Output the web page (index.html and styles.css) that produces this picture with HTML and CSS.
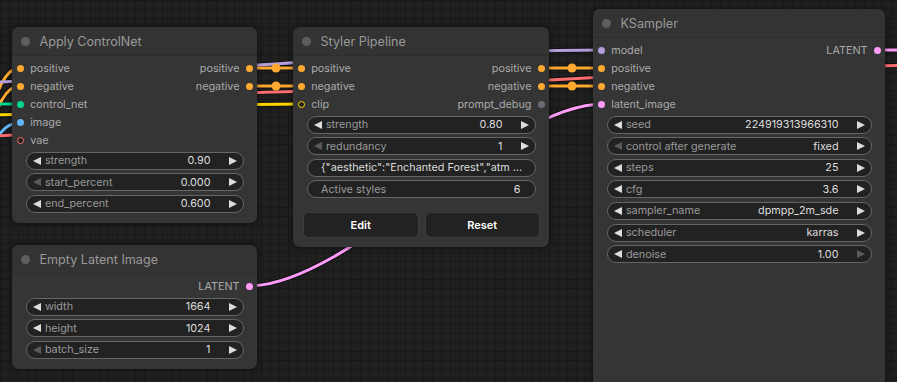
FILE: index.html
```html
<!DOCTYPE html>
<html>
    <head>
        <link rel="stylesheet" href="styles.css">
    </head>
    <body>
        <div class="canvas">
            <svg class="links" width="897" height="382" viewBox="0 0 897 382">
                <g class="shadow">
                    <path d="M -40 160 C -10 160, -10 68, 20 68"/>
                    <path d="M -40 172 C -10 172, -10 86, 20 86"/>
                    <path d="M 0 82 C 150 75, 400 50, 603 50"/>
                    <path d="M -100 116 C 100 116, 150 104, 303 104"/>
                    <path d="M -50 104 L 20 104"/>
                    <path d="M -30 152 C 0 152, -5 123, 20 123"/>
                    <path d="M -20 136 C 120 136, 160 93, 275 92 C 450 89, 650 70, 920 65"/>
                    <path d="M 249 68 L 303 68"/>
                    <path d="M 249 86 L 303 86"/>
                    <path d="M 541 68 L 603 68"/>
                    <path d="M 541 86 L 603 86"/>
                    <path d="M 249 286 C 349 286, 503 104, 603 104"/>
                    <path d="M 876 50 L 920 50"/>
                </g>
                <path class="link orange" d="M -40 160 C -10 160, -10 68, 20 68"/>
                <path class="link orange" d="M -40 172 C -10 172, -10 86, 20 86"/>
                <path class="link purple" d="M 0 82 C 150 75, 400 50, 603 50"/>
                <path class="link yellow" d="M -100 116 C 100 116, 150 104, 303 104"/>
                <path class="link green" d="M -50 104 L 20 104"/>
                <path class="link blue" d="M -30 152 C 0 152, -5 123, 20 123"/>
                <path class="link red" d="M -20 136 C 120 136, 160 93, 275 92 C 450 89, 650 70, 920 65"/>
                <path class="link orange" d="M 249 68 L 303 68"/>
                <path class="link orange" d="M 249 86 L 303 86"/>
                <path class="link orange" d="M 541 68 L 603 68"/>
                <path class="link orange" d="M 541 86 L 603 86"/>
                <path class="link pink" d="M 249 286 C 349 286, 503 104, 603 104"/>
                <path class="link pink" d="M 876 50 L 920 50"/>
                <circle class="marker" cx="276" cy="68" r="4.5"/>
                <circle class="marker" cx="276" cy="86" r="4.5"/>
                <circle class="marker" cx="572" cy="68" r="4.5"/>
                <circle class="marker" cx="572" cy="86" r="4.5"/>
            </svg>

            <div class="node controlnet">
                <div class="title"><span class="tdot"></span>Apply ControlNet</div>
                <div class="body">
                    <div class="row">
                        <div class="slot"><i class="dot c-cond"></i>positive</div>
                        <div class="slot">positive<i class="dot c-cond"></i></div>
                    </div>
                    <div class="row">
                        <div class="slot"><i class="dot c-cond"></i>negative</div>
                        <div class="slot">negative<i class="dot c-cond"></i></div>
                    </div>
                    <div class="row"><div class="slot"><i class="dot c-cnet"></i>control_net</div></div>
                    <div class="row"><div class="slot"><i class="dot c-image"></i>image</div></div>
                    <div class="row"><div class="slot"><i class="dot ring c-vae"></i>vae</div></div>
                    <div class="widgets">
                        <div class="w"><span class="arr left"></span><span class="lbl">strength</span><span class="val">0.90</span><span class="arr right"></span></div>
                        <div class="w"><span class="arr left off"></span><span class="lbl">start_percent</span><span class="val">0.000</span><span class="arr right"></span></div>
                        <div class="w"><span class="arr left"></span><span class="lbl">end_percent</span><span class="val">0.600</span><span class="arr right"></span></div>
                    </div>
                </div>
            </div>

            <div class="node styler">
                <div class="title"><span class="tdot"></span>Styler Pipeline</div>
                <div class="body">
                    <div class="row">
                        <div class="slot"><i class="dot c-cond"></i>positive</div>
                        <div class="slot">positive<i class="dot c-cond"></i></div>
                    </div>
                    <div class="row">
                        <div class="slot"><i class="dot c-cond"></i>negative</div>
                        <div class="slot">negative<i class="dot c-cond"></i></div>
                    </div>
                    <div class="row">
                        <div class="slot"><i class="dot ring c-clip"></i>clip</div>
                        <div class="slot">prompt_debug<i class="dot c-string"></i></div>
                    </div>
                    <div class="widgets">
                        <div class="w"><span class="arr left"></span><span class="lbl">strength</span><span class="val">0.80</span><span class="arr right"></span></div>
                        <div class="w"><span class="arr left off"></span><span class="lbl">redundancy</span><span class="val">1</span><span class="arr right"></span></div>
                        <div class="w plain"><span class="txt">{"aesthetic":"Enchanted Forest","atm …</span></div>
                        <div class="w plain"><span class="lbl">Active styles</span><span class="val">6</span></div>
                    </div>
                    <div class="btns">
                        <div class="btn">Edit</div>
                        <div class="btn">Reset</div>
                    </div>
                </div>
            </div>

            <div class="node ksampler">
                <div class="title"><span class="tdot"></span>KSampler</div>
                <div class="body">
                    <div class="row">
                        <div class="slot"><i class="dot c-model"></i>model</div>
                        <div class="slot">LATENT<i class="dot c-latent"></i></div>
                    </div>
                    <div class="row"><div class="slot"><i class="dot c-cond"></i>positive</div></div>
                    <div class="row"><div class="slot"><i class="dot c-cond"></i>negative</div></div>
                    <div class="row"><div class="slot"><i class="dot c-latent"></i>latent_image</div></div>
                    <div class="widgets">
                        <div class="w"><span class="arr left"></span><span class="lbl">seed</span><span class="val">224919313966310</span><span class="arr right"></span></div>
                        <div class="w"><span class="arr left off"></span><span class="lbl">control after generate</span><span class="val">fixed</span><span class="arr right"></span></div>
                        <div class="w"><span class="arr left"></span><span class="lbl">steps</span><span class="val">25</span><span class="arr right"></span></div>
                        <div class="w"><span class="arr left"></span><span class="lbl">cfg</span><span class="val">3.6</span><span class="arr right"></span></div>
                        <div class="w"><span class="arr left"></span><span class="lbl">sampler_name</span><span class="val">dpmpp_2m_sde</span><span class="arr right"></span></div>
                        <div class="w"><span class="arr left"></span><span class="lbl">scheduler</span><span class="val">karras</span><span class="arr right"></span></div>
                        <div class="w"><span class="arr left"></span><span class="lbl">denoise</span><span class="val">1.00</span><span class="arr right off"></span></div>
                    </div>
                </div>
            </div>

            <div class="node latent">
                <div class="title"><span class="tdot"></span>Empty Latent Image</div>
                <div class="body">
                    <div class="row end">
                        <div class="slot">LATENT<i class="dot c-latent"></i></div>
                    </div>
                    <div class="widgets">
                        <div class="w"><span class="arr left"></span><span class="lbl">width</span><span class="val">1664</span><span class="arr right"></span></div>
                        <div class="w"><span class="arr left"></span><span class="lbl">height</span><span class="val">1024</span><span class="arr right"></span></div>
                        <div class="w"><span class="arr left off"></span><span class="lbl">batch_size</span><span class="val">1</span><span class="arr right"></span></div>
                    </div>
                </div>
            </div>
        </div>
    </body>
</html>
```

FILE: styles.css
```css
:root {
    --node-bg: #353535;
    --title-bg: #333;
    --widget-bg: #222;
    --widget-line: #666;
    --text: #aaa;
    --value: #ddd;
    --muted: #999;
}
* {
    box-sizing: border-box;
}
body {
    margin: 0;
    width: 897px;
    height: 382px;
    overflow: hidden;
    font-family: Inter, "Liberation Sans", sans-serif;
}
.canvas {
    position: relative;
    width: 897px;
    height: 382px;
    overflow: hidden;
    background-color: #1f1f1f;
    background-image:
        linear-gradient(#181818 1px, transparent 1px),
        linear-gradient(90deg, #181818 1px, transparent 1px);
    background-size: 9px 9px;
}
.links {
    position: absolute;
    left: 0;
    top: 0;
}
.links path {
    fill: none;
}
.shadow path {
    stroke: rgba(0,0,0,.45);
    stroke-width: 5;
}
.link {
    stroke-width: 3;
}
.orange { stroke: #ffa931; }
.purple { stroke: #b39ddb; }
.yellow { stroke: #ffd500; }
.green { stroke: #00d78d; }
.blue { stroke: #64b5f6; }
.red { stroke: #ff6e6e; }
.pink { stroke: #ff9cf9; }
.marker {
    fill: #ffa931;
}

/* nodes */
.node {
    position: absolute;
    background: var(--node-bg);
    border-radius: 7px;
    box-shadow: 0 0 5px rgba(0,0,0,.6);
    display: flex;
    flex-direction: column;
}
.controlnet { left: 12px; top: 27px; width: 245px; height: 196px; }
.styler { left: 293px; top: 27px; width: 256px; height: 220px; }
.ksampler { left: 593px; top: 9px; width: 292px; height: 390px; }
.latent { left: 12px; top: 245px; width: 245px; height: 124px; }

.title {
    height: 29px;
    display: flex;
    align-items: center;
    gap: 9.5px;
    padding-left: 9px;
    color: var(--muted);
    font-size: 12.6px;
    background: var(--title-bg);
    border-bottom: 1px solid #2d2d2d;
    border-radius: 7px 7px 0 0;
}
.tdot {
    width: 9px;
    height: 9px;
    border-radius: 50%;
    background: #5e5e5e;
}
.body {
    padding-top: 3.6px;
    display: flex;
    flex-direction: column;
}
.row {
    height: 18px;
    display: flex;
    align-items: center;
    justify-content: space-between;
    padding: 0 4.5px 0 5.2px;
    font-size: 10.8px;
    color: var(--text);
}
.row.end {
    justify-content: flex-end;
}
.slot {
    display: flex;
    align-items: center;
    gap: 6px;
}
.dot {
    width: 7px;
    height: 7px;
    border-radius: 50%;
}
.ring {
    border: 1.6px solid;
    background: #222;
}
.c-cond { background: #ffa931; }
.c-cnet { background: #00d78d; }
.c-image { background: #64b5f6; }
.c-vae { border-color: #ff6e6e; }
.c-clip { border-color: #ffd500; }
.c-model { background: #b39ddb; }
.c-latent { background: #ff9cf9; }
.c-string { background: #6c6c74; }

/* widgets */
.widgets {
    display: flex;
    flex-direction: column;
    gap: 3.6px;
    padding: 0 13.5px;
    margin-top: 2px;
}
.w {
    height: 18px;
    border: 1px solid var(--widget-line);
    background: var(--widget-bg);
    border-radius: 9px;
    display: flex;
    align-items: center;
    padding: 0 6px;
    font-size: 10.8px;
    color: var(--muted);
    white-space: nowrap;
}
.w .lbl {
    margin-left: 4.4px;
    flex: 1;
}
.w .val {
    color: var(--value);
    margin-right: 18px;
}
.w.plain {
    padding: 0 14px 0 13.5px;
}
.w.plain .lbl {
    margin-left: 0;
}
.w.plain .val {
    margin-right: 0;
}
.w .txt {
    color: var(--value);
}
.arr {
    width: 0;
    height: 0;
    border-top: 4.5px solid transparent;
    border-bottom: 4.5px solid transparent;
}
.arr.left {
    border-right: 8px solid var(--value);
}
.arr.right {
    border-left: 8px solid var(--value);
}
.arr.left.off {
    border-right-color: #5a5a5a;
}
.arr.right.off {
    border-left-color: #5a5a5a;
}

.btns {
    display: flex;
    gap: 6px;
    margin-top: 13.5px;
    padding: 0 9px 0 10px;
}
.btn {
    flex: 1;
    height: 26px;
    background: #222;
    border: 1px solid #3d3d3d;
    border-radius: 6px;
    color: #fff;
    font-size: 11px;
    font-weight: 600;
    display: flex;
    align-items: center;
    justify-content: center;
}
```
